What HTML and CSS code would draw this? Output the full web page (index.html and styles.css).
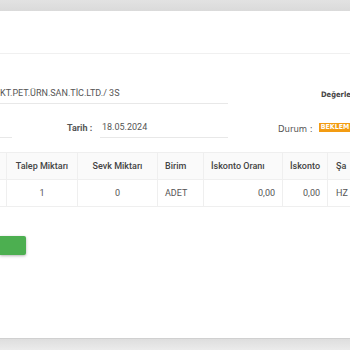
FILE: index.html
```html
<!DOCTYPE html>
<html lang="tr">
<head>
<meta charset="utf-8">
<link rel="stylesheet" href="styles.css">
</head>
<body>
<div class="topbar"></div>
<div class="modal">
  <div class="modal-head"></div>
  <div class="form">
    <div class="row row1">
      <div class="input firm">KT.PET.ÜRN.SAN.TİC.LTD./ 3S</div>
      <div class="label-right">Değerle</div>
    </div>
    <div class="row row2">
      <div class="input stub"></div>
      <div class="label tarih">Tarih :</div>
      <div class="input date">18.05.2024</div>
      <div class="label durum">Durum :</div>
      <div class="badge">BEKLEM</div>
    </div>
  </div>
  <table class="grid">
    <thead>
      <tr>
        <th class="c0"></th>
        <th class="c1">Talep Miktarı</th>
        <th class="c2">Sevk Miktarı</th>
        <th class="c3">Birim</th>
        <th class="c4">İskonto Oranı</th>
        <th class="c5">İskonto</th>
        <th class="c6">Şa</th>
      </tr>
    </thead>
    <tbody>
      <tr>
        <td class="c0"></td>
        <td class="c1 center">1</td>
        <td class="c2 center">0</td>
        <td class="c3">ADET</td>
        <td class="c4 right">0,00</td>
        <td class="c5 right">0,00</td>
        <td class="c6">HZ</td>
      </tr>
    </tbody>
  </table>
  <div class="actions"><span class="btn"></span></div>
</div>
<div class="bottombar"></div>
</body>
</html>
```
FILE: styles.css
```css
html, body {
  margin: 0;
  padding: 0;
  background: #fff;
}
body {
  width: 350px;
  height: 350px;
  overflow: hidden;
  font-family: Roboto, "Liberation Sans", sans-serif;
  color: #555;
  display: flex;
  flex-direction: column;
}
.topbar {
  height: 11px;
  flex: none;
  background: linear-gradient(#e2e2e2, #dadada);
}
.modal {
  flex: 1;
  background: #fff;
}
.modal-head {
  height: 42px;
  border-bottom: 1px solid #f0f0f0;
}
.form {
  padding-top: 34px;
}
.row {
  display: flex;
  align-items: flex-end;
  white-space: nowrap;
}
.row > * {
  flex: none;
}
.input {
  font-size: 9px;
  color: #555;
  border-bottom: 1px solid #e8e8e8;
  padding-bottom: 4px;
  line-height: 11px;
}
.firm {
  width: 228px;
}
.label-right {
  margin-left: 93px;
  font-family: "DejaVu Sans Condensed", "DejaVu Sans", sans-serif;
  font-weight: bold;
  font-size: 7.5px;
  color: #444;
  padding-bottom: 5px;
}
.row2 {
  margin-top: 18px;
}
.stub {
  width: 12px;
  height: 11px;
}
.label {
  font-size: 9px;
  font-weight: bold;
  color: #555;
  padding-bottom: 4px;
  line-height: 11px;
}
.tarih {
  margin-left: 55px;
  width: 33px;
}
.date {
  width: 126px;
  padding-left: 2px;
}
.durum {
  margin-left: 50px;
  font-family: "DejaVu Sans", sans-serif;
  font-weight: normal;
  font-size: 8.5px;
  color: #555;
  padding-bottom: 3px;
}
.badge {
  margin-left: 6px;
  align-self: flex-start;
  margin-top: 1px;
  background: #f39c12;
  color: #fff;
  font-family: "DejaVu Sans Condensed", "DejaVu Sans", sans-serif;
  font-weight: bold;
  font-size: 7px;
  line-height: 9px;
  padding: 0 2px;
  width: 32px;
}
.grid {
  margin-top: 14px;
  border-collapse: collapse;
  font-size: 9px;
  table-layout: fixed;
  width: 350px;
}
.grid th, .grid td {
  border: 1px solid #efefef;
  padding: 0 7px;
  white-space: nowrap;
  overflow: hidden;
}
.grid th {
  height: 26px;
  text-align: left;
  font-weight: 500;
  color: #444;
  background: #fafafa;
}
.grid td {
  height: 26px;
  color: #555;
}
.c0 { width: 6px; padding: 0 !important; border-left: none !important; }
.c1 { width: 56px; }
.c2 { width: 65px; }
.c3 { width: 31px; }
.c4 { width: 64px; }
.c5 { width: 30px; }
.grid .c6 { border-right: none; padding-left: 8px; padding-right: 0; }
.grid th.c1, .grid th.c2 { text-align: center; }
.center { text-align: center; }
.right { text-align: right; }
.actions {
  margin-top: 29px;
}
.btn {
  display: block;
  width: 26px;
  height: 19px;
  background: #4caf50;
  box-shadow: 0 1px 3px rgba(0,0,0,0.3);
  border-radius: 0 2px 2px 0;
}
.bottombar {
  height: 11px;
  flex: none;
  border-top: 1px solid #d0d0d0;
  background: linear-gradient(#dedede, #ebebeb);
}
```
